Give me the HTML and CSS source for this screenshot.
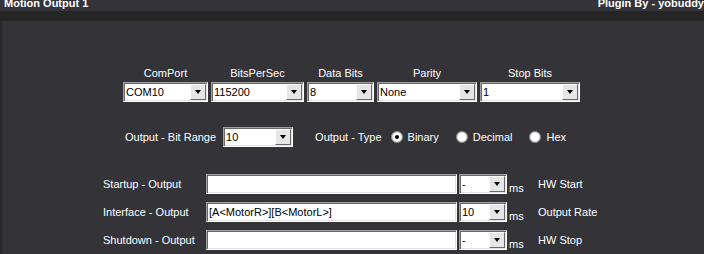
FILE: index.html
```html
<!DOCTYPE html>
<html lang="en">
<head>
    <meta charset="UTF-8">
    <title>Motion Output 1</title>
    <link rel="stylesheet" href="styles.css">
</head>
<body>
    <div class="titlebar">
        <span class="title">Motion Output 1</span>
        <span class="credit">Plugin By - yobuddy</span>
    </div>
    <div class="band"></div>

    <div class="panel">
        <!-- Serial port settings -->
        <div class="serial">
            <div class="field">
                <label>ComPort</label>
                <div class="combo w-port"><span class="value">COM10</span><span class="drop"></span></div>
            </div>
            <div class="field">
                <label>BitsPerSec</label>
                <div class="combo w-baud"><span class="value">115200</span><span class="drop"></span></div>
            </div>
            <div class="field">
                <label>Data Bits</label>
                <div class="combo w-data"><span class="value">8</span><span class="drop"></span></div>
            </div>
            <div class="field">
                <label>Parity</label>
                <div class="combo w-wide"><span class="value">None</span><span class="drop"></span></div>
            </div>
            <div class="field">
                <label>Stop Bits</label>
                <div class="combo w-wide"><span class="value">1</span><span class="drop"></span></div>
            </div>
        </div>

        <!-- Bit range and output type -->
        <div class="range">
            <span class="range-label">Output - Bit Range</span>
            <div class="combo w-range"><span class="value">10</span><span class="drop"></span></div>
            <span class="type-label">Output - Type</span>
            <div class="radios">
                <span class="radio"><span class="dot checked"></span>Binary</span>
                <span class="radio"><span class="dot"></span>Decimal</span>
                <span class="radio"><span class="dot"></span>Hex</span>
            </div>
        </div>

        <!-- Output strings -->
        <div class="outputs">
            <span>Startup - Output</span>
            <div class="textbox"></div>
            <div class="combo"><span class="value">-</span><span class="drop"></span></div>
            <span class="ms">ms</span>
            <span class="note">HW Start</span>

            <span>Interface - Output</span>
            <div class="textbox">[A&lt;MotorR&gt;][B&lt;MotorL&gt;]</div>
            <div class="combo"><span class="value">10</span><span class="drop"></span></div>
            <span class="ms">ms</span>
            <span class="note">Output Rate</span>

            <span>Shutdown - Output</span>
            <div class="textbox"></div>
            <div class="combo"><span class="value">-</span><span class="drop"></span></div>
            <span class="ms">ms</span>
            <span class="note">HW Stop</span>
        </div>
    </div>
</body>
</html>
```

FILE: styles.css
```css
body {
    margin: 0;
    width: 704px;
    height: 254px;
    overflow: hidden;
    background-color: #333338;
    font-family: "Liberation Sans", Arial, sans-serif;
    font-size: 11px;
    color: #ffffff;
}
.titlebar {
    height: 11px;
    display: flex;
    justify-content: space-between;
    overflow: hidden;
    font-weight: bold;
    line-height: 11px;
    white-space: nowrap;
}
.titlebar span {
    margin-top: -2px;
}
.title {
    padding-left: 4px;
}
.band {
    height: 10px;
    background-color: #252526;
}
.panel {
    box-sizing: border-box;
    height: 233px;
    padding-top: 46px;
    border-left: 2px solid #2a2a2e;
}

/* combo boxes and text boxes with the sunken 3D border */
.combo, .textbox {
    box-sizing: border-box;
    height: 20px;
    background-color: #ffffff;
    color: #000000;
    border: 1px solid;
    border-color: #a0a0a0 #ffffff #ffffff #a0a0a0;
    box-shadow: inset 1px 1px #696969, inset -1px -1px #e3e3e3;
}
.combo {
    display: flex;
    align-items: center;
}
.value {
    flex: 1;
    padding-left: 2px;
    white-space: nowrap;
}
.drop {
    box-sizing: border-box;
    width: 16px;
    height: 16px;
    margin-right: 1px;
    display: flex;
    align-items: center;
    justify-content: center;
    background-color: #e6e6e6;
    border: 1px solid;
    border-color: #ffffff #696969 #696969 #ffffff;
}
.drop::after {
    content: "";
    border-left: 3.5px solid transparent;
    border-right: 3.5px solid transparent;
    border-top: 4px solid #000000;
}
.textbox {
    padding-left: 2px;
    line-height: 18px;
}

.serial {
    display: flex;
    gap: 3px;
    margin-left: 121px;
}
.field {
    display: flex;
    flex-direction: column;
    align-items: center;
    gap: 2px;
}
.field label {
    line-height: 13px;
}
.w-port { width: 85px; }
.w-baud { width: 93px; }
.w-data { width: 67px; }
.w-wide { width: 100px; }
.w-range { width: 70px; margin-left: 7px; }

.range {
    display: flex;
    align-items: center;
    height: 20px;
    margin-top: 25px;
    margin-left: 123px;
}
.type-label {
    margin-left: 22px;
}
.radios {
    display: flex;
    gap: 17px;
    margin-left: 9px;
}
.radio {
    display: flex;
    align-items: center;
    gap: 5px;
}
.dot {
    box-sizing: border-box;
    width: 12px;
    height: 12px;
    border-radius: 50%;
    background-color: #ffffff;
    border: 1px solid #8a8a8a;
    box-shadow: inset 0 0 0 1px #dcdcdc;
    display: flex;
    align-items: center;
    justify-content: center;
}
.dot.checked::after {
    content: "";
    width: 4px;
    height: 4px;
    border-radius: 50%;
    background-color: #000000;
}

.outputs {
    display: grid;
    grid-template-columns: 101px 251px 48px 16px auto;
    column-gap: 2px;
    row-gap: 8px;
    align-items: center;
    margin-top: 27px;
    margin-left: 101px;
}
.ms {
    align-self: end;
    line-height: 13px;
    margin-bottom: -1px;
}
.note {
    margin-left: 11px;
}
```
